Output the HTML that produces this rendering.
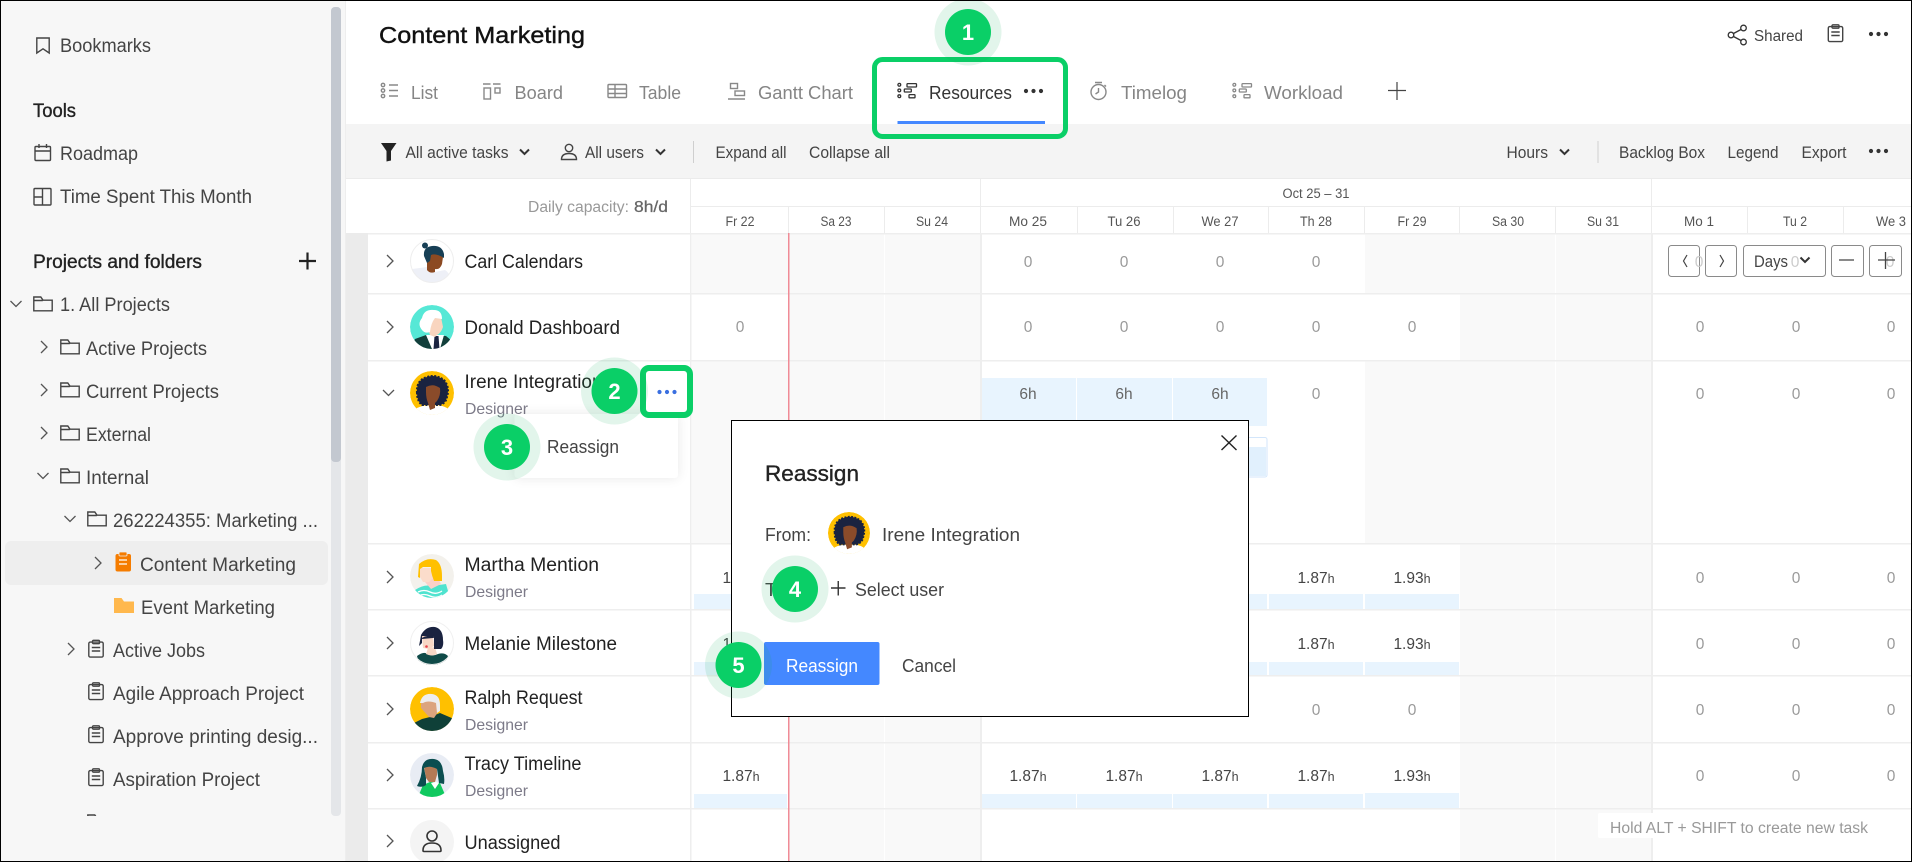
<!DOCTYPE html>
<html lang="en"><head><meta charset="utf-8"><title>Content Marketing</title>
<style>
html,body{margin:0;padding:0;background:#fff;width:1912px;height:862px;overflow:hidden}
svg{display:block}
text{font-family:"Liberation Sans",Arial,sans-serif;white-space:pre}
.s{font-size:19px;fill:#444}
.b{font-size:19px;fill:#222;stroke:#222;stroke-width:.35}
.n{font-size:19px;fill:#222}
.d{font-size:16px;fill:#7c7a88}
.t{font-size:18.5px;fill:#858585}
.k{font-size:16.5px;fill:#444}
.h{font-size:13.5px;fill:#555;text-anchor:middle}
.z{font-size:15.5px;fill:#9a9a9a;text-anchor:middle}
.v{font-size:15.5px;fill:#444;text-anchor:middle}
.v tspan{font-size:12.5px}
.m{font-size:18.5px;fill:#444}
.c{font-size:22px;font-weight:bold;fill:#fff;text-anchor:middle}
.i{fill:none;stroke:#444;stroke-width:1.4}
.g{fill:none;stroke:#888;stroke-width:1.4}
</style></head><body>
<svg width="1912" height="862" viewBox="0 0 1912 862" xmlns="http://www.w3.org/2000/svg">
<defs>
<clipPath id="cc"><circle r="22"/></clipPath>
<clipPath id="sl"><rect x="0" y="0" width="330" height="816"/></clipPath>
<g id="folder" fill="none" stroke="#444" stroke-width="1.4"><path d="M.8 4.5V1h7l2.2 3.2h9.2v10.6H.8zM.8 4.5h9"/></g>
<g id="clip" fill="none" stroke="#444" stroke-width="1.4"><rect x=".8" y="2.6" width="14.4" height="15" rx="1.5"/><rect x="4.5" y=".8" width="7" height="3.4" rx="1"/><path d="M3.8 8h8.4M3.8 11.5h8.4"/></g>
<g id="res"><g fill="none" stroke-width="1.3"><circle cx="1.8" cy="1.8" r="1.4"/><circle cx="1.8" cy="7.4" r="1.4"/><circle cx="1.8" cy="13.2" r="1.4"/><rect x="9.5" y=".6" width="9.5" height="3.4" rx=".6"/><rect x="6.8" y="6" width="7" height="3" rx=".6"/><rect x="11.5" y="11.6" width="6" height="3.2" rx=".6"/></g></g>
<g id="cr"><path d="M-3-6 3 0-3 6" fill="none" stroke="#555" stroke-width="1.3"/></g>
<g id="cd"><path d="M-5.5-3 0 2.5 5.5-3" fill="none" stroke="#555" stroke-width="1.3"/></g>
<g id="ck"><path d="M-4.500-2.500 0 2 4.500-2.500" fill="none" stroke="#333" stroke-width="2"/></g>
<g id="dots"><circle cx="-7.500" r="2.100"/><circle r="2.100"/><circle cx="7.500" r="2.100"/></g>
<g id="irene"><g clip-path="url(#cc)"><circle r="22" fill="#ffc000"/><path d="M-22 24-15 15Q-6 11 0 13 8 11 15 15L22 24z" fill="#fff"/><path d="M-15 0Q-16-13-5-16 4-19 12-13 18-6 15 4 14 10 8 12L-10 12Q-15 8-15 0z" fill="#1a2340" stroke="#1a2340" stroke-width="2" stroke-dasharray="2 1.500"/><path d="M-6-6Q1-10 8-5 9 2 5 8L3 10 3 15-2 17-4 10Q-6 5-6-1z" fill="#8a4b2a"/></g></g>
</defs>

<!-- sidebar -->
<rect width="1912" height="862" fill="#fff"/>
<rect x="0" y="0" width="345" height="862" fill="#f7f7f7"/>
<rect x="345" y="0" width="1" height="862" fill="#eeeeee"/>
<rect x="331" y="7" width="10" height="809" rx="4" fill="#e4e6e9"/>
<rect x="331" y="7" width="10" height="455" rx="4" fill="#c3c8d0"/>

<path class="i" d="M36.800 38h12.400v15l-6.200-4.200-6.200 4.200z"/>
<text class="s" x="60" y="52" textLength="91" lengthAdjust="spacingAndGlyphs">Bookmarks</text>
<text class="b" x="33" y="117" textLength="43" lengthAdjust="spacingAndGlyphs">Tools</text>
<g class="i"><rect x="35" y="146.500" width="15.500" height="14" rx="1"/><path d="M35 151h15.500M39 144v4M46.500 144v4"/></g>
<text class="s" x="60" y="160" textLength="78" lengthAdjust="spacingAndGlyphs">Roadmap</text>
<g class="i"><rect x="34" y="188.500" width="17" height="16.500" rx="1"/><path d="M42.500 188.500V205M34 197h8.500"/></g>
<text class="s" x="60" y="203" textLength="192" lengthAdjust="spacingAndGlyphs">Time Spent This Month</text>
<text class="b" x="33" y="268" textLength="169" lengthAdjust="spacingAndGlyphs">Projects and folders</text>
<path d="M299 261h17M307.500 252.500v17" stroke="#222" stroke-width="2.200" fill="none"/>

<use href="#cd" x="16" y="304"/><use href="#folder" x="33" y="296"/>
<text class="s" x="60" y="311" textLength="110" lengthAdjust="spacingAndGlyphs">1. All Projects</text>
<use href="#cr" x="44" y="347"/><use href="#folder" x="60" y="339"/>
<text class="s" x="86" y="355" textLength="121" lengthAdjust="spacingAndGlyphs">Active Projects</text>
<use href="#cr" x="44" y="390"/><use href="#folder" x="60" y="382"/>
<text class="s" x="86" y="398" textLength="133" lengthAdjust="spacingAndGlyphs">Current Projects</text>
<use href="#cr" x="44" y="433"/><use href="#folder" x="60" y="425"/>
<text class="s" x="86" y="441" textLength="65" lengthAdjust="spacingAndGlyphs">External</text>
<use href="#cd" x="43" y="476"/><use href="#folder" x="60" y="468"/>
<text class="s" x="86" y="484" textLength="63" lengthAdjust="spacingAndGlyphs">Internal</text>
<use href="#cd" x="70" y="519"/><use href="#folder" x="87" y="511"/>
<text class="s" x="113" y="527" textLength="205" lengthAdjust="spacingAndGlyphs">262224355: Marketing ...</text>
<rect x="5" y="541" width="323" height="44" rx="6" fill="#eeeeee"/>
<use href="#cr" x="98" y="563"/>
<g><rect x="115.500" y="554" width="15.500" height="17.500" rx="2" fill="#f57c00"/><rect x="119" y="552" width="8" height="4" rx="1" fill="#f57c00" stroke="#eee" stroke-width=".8"/><path d="M119 560h8M119 564h8" stroke="#fff" stroke-width="1.300"/></g>
<text class="s" x="140" y="571" textLength="156" lengthAdjust="spacingAndGlyphs">Content Marketing</text>
<path d="M114 613V598h7.500l2.500 3.500h10V613z" fill="#ffb84d"/>
<text class="s" x="141" y="614" textLength="134" lengthAdjust="spacingAndGlyphs">Event Marketing</text>
<use href="#cr" x="71" y="649"/><use href="#clip" x="88" y="639.500"/>
<text class="s" x="113" y="657" textLength="92" lengthAdjust="spacingAndGlyphs">Active Jobs</text>
<use href="#clip" x="88" y="682"/>
<text class="s" x="113" y="700" textLength="191" lengthAdjust="spacingAndGlyphs">Agile Approach Project</text>
<use href="#clip" x="88" y="725"/>
<text class="s" x="113" y="743" textLength="205" lengthAdjust="spacingAndGlyphs">Approve printing desig...</text>
<use href="#clip" x="88" y="768"/>
<text class="s" x="113" y="786" textLength="147" lengthAdjust="spacingAndGlyphs">Aspiration Project</text>
<g clip-path="url(#sl)"><use href="#folder" x="87" y="814"/><use href="#cr" x="71" y="824"/><text class="s" x="113" y="830" textLength="110" lengthAdjust="spacingAndGlyphs">Sales kickoff</text></g>

<!-- main chrome -->
<rect x="346" y="124" width="1566" height="54" fill="#f4f4f4"/>
<rect x="346" y="178" width="1566" height="1" fill="#ebebeb"/>
<rect x="346" y="233" width="22" height="629" fill="#ebebeb"/>

<text x="379" y="43" font-size="23.500" fill="#111" stroke="#111" stroke-width=".4" textLength="206" lengthAdjust="spacingAndGlyphs">Content Marketing</text>

<!-- tabs -->
<g class="g"><circle cx="383" cy="85" r="1.700"/><circle cx="383" cy="90.500" r="1.700"/><circle cx="383" cy="96" r="1.700"/><path d="M389 85h9M389 90.500h9M389 96h9"/></g>
<text class="t" x="411" y="99" textLength="27" lengthAdjust="spacingAndGlyphs">List</text>
<g class="g"><path d="M483 84h7.500M493 84h7.500"/><rect x="484" y="88" width="6.500" height="11"/><rect x="495" y="88" width="5" height="5"/></g>
<text class="t" x="514.500" y="99" textLength="48.500" lengthAdjust="spacingAndGlyphs">Board</text>
<g class="g"><rect x="608" y="84.500" width="18.500" height="13" rx="1"/><path d="M608 89h18.500M608 93.500h18.500M615 84.500v13"/></g>
<text class="t" x="639" y="99" textLength="42" lengthAdjust="spacingAndGlyphs">Table</text>
<g class="g"><rect x="730.500" y="83.500" width="7" height="5"/><rect x="735" y="91" width="9.500" height="4.500"/><path d="M728 99h17"/></g>
<text class="t" x="758" y="99" textLength="95" lengthAdjust="spacingAndGlyphs">Gantt Chart</text>
<use href="#res" x="897.500" y="83" stroke="#333"/>
<text x="929" y="99" font-size="18.500" fill="#333" textLength="83" lengthAdjust="spacingAndGlyphs">Resources</text>
<use href="#dots" x="1033.500" y="91" fill="#333"/>
<rect x="897.500" y="121" width="147.500" height="3" fill="#4488ff"/>
<g class="g"><circle cx="1098.500" cy="92" r="7.500"/><path d="M1098.500 88v4l-3 2M1095 82.500h7M1104.500 85l1.500 1.500"/></g>
<text class="t" x="1121" y="99" textLength="66" lengthAdjust="spacingAndGlyphs">Timelog</text>
<use href="#res" x="1232.500" y="83" stroke="#888"/>
<text class="t" x="1264" y="99" textLength="79" lengthAdjust="spacingAndGlyphs">Workload</text>
<path d="M1388 90.500h18M1397 82v18" stroke="#444" stroke-width="1.200" fill="none"/>

<!-- top right -->
<g fill="none" stroke="#333" stroke-width="1.300"><circle cx="1743.500" cy="28" r="2.800"/><circle cx="1731" cy="35" r="2.800"/><circle cx="1743.500" cy="42" r="2.800"/><path d="M1733.500 33.500 1741 29.500M1733.500 36.500 1741 40.500"/></g>
<text x="1754" y="41" font-size="15.500" fill="#444" textLength="49" lengthAdjust="spacingAndGlyphs">Shared</text>
<use href="#clip" x="1827.500" y="24"/>
<use href="#dots" x="1878.500" y="34" fill="#333"/>

<!-- toolbar -->
<path d="M381 143h15.500l-5.500 8v9.500l-4.500 1V151z" fill="#222"/>
<text class="k" x="405.500" y="158" textLength="103" lengthAdjust="spacingAndGlyphs">All active tasks</text>
<use href="#ck" x="524.500" y="152"/>
<g fill="none" stroke="#444" stroke-width="1.400"><circle cx="569" cy="148" r="3.700"/><path d="M561.500 159.500q0-6 7.500-6t7.500 6z"/></g>
<text class="k" x="585" y="158" textLength="59" lengthAdjust="spacingAndGlyphs">All users</text>
<use href="#ck" x="660.500" y="152"/>
<rect x="693" y="141" width="1" height="22" fill="#cfcfcf"/>
<text class="k" x="715.500" y="158" textLength="71" lengthAdjust="spacingAndGlyphs">Expand all</text>
<text class="k" x="809" y="158" textLength="81" lengthAdjust="spacingAndGlyphs">Collapse all</text>
<text class="k" x="1506.500" y="158" textLength="41.500" lengthAdjust="spacingAndGlyphs">Hours</text>
<use href="#ck" x="1564.500" y="152"/>
<rect x="1597.500" y="141" width="1" height="22" fill="#cfcfcf"/>
<text class="k" x="1619" y="158" textLength="86" lengthAdjust="spacingAndGlyphs">Backlog Box</text>
<text class="k" x="1727.500" y="158" textLength="51" lengthAdjust="spacingAndGlyphs">Legend</text>
<text class="k" x="1801.500" y="158" textLength="45" lengthAdjust="spacingAndGlyphs">Export</text>
<use href="#dots" x="1878.500" y="151" fill="#333"/>

<!-- grid header -->
<text x="528" y="212" font-size="15.500" fill="#999" textLength="101" lengthAdjust="spacingAndGlyphs">Daily capacity:</text>
<text x="634" y="212" font-size="15.500" fill="#666" stroke="#666" stroke-width=".25" textLength="34" lengthAdjust="spacingAndGlyphs">8h/d</text>
<text class="h" x="1316" y="198" textLength="67" lengthAdjust="spacingAndGlyphs">Oct 25 – 31</text>
<text class="h" x="740" y="226" textLength="29" lengthAdjust="spacingAndGlyphs">Fr 22</text><text class="h" x="836" y="226" textLength="31" lengthAdjust="spacingAndGlyphs">Sa 23</text><text class="h" x="932" y="226" textLength="32" lengthAdjust="spacingAndGlyphs">Su 24</text>
<text class="h" x="1028" y="226" textLength="38" lengthAdjust="spacingAndGlyphs">Mo 25</text><text class="h" x="1124" y="226" textLength="33" lengthAdjust="spacingAndGlyphs">Tu 26</text><text class="h" x="1220" y="226" textLength="37" lengthAdjust="spacingAndGlyphs">We 27</text>
<text class="h" x="1316" y="226" textLength="32" lengthAdjust="spacingAndGlyphs">Th 28</text><text class="h" x="1412" y="226" textLength="29" lengthAdjust="spacingAndGlyphs">Fr 29</text><text class="h" x="1508" y="226" textLength="32" lengthAdjust="spacingAndGlyphs">Sa 30</text>
<text class="h" x="1603" y="226" textLength="32" lengthAdjust="spacingAndGlyphs">Su 31</text><text class="h" x="1699" y="226" textLength="30" lengthAdjust="spacingAndGlyphs">Mo 1</text><text class="h" x="1795" y="226" textLength="24" lengthAdjust="spacingAndGlyphs">Tu 2</text><text class="h" x="1891" y="226" textLength="30" lengthAdjust="spacingAndGlyphs">We 3</text>
<rect x="691" y="206" width="1221" height="1" fill="#ececec"/>
<g fill="#ececec">
<rect x="788" y="206" width="1" height="27"/><rect x="884" y="206" width="1" height="27"/><rect x="1077" y="206" width="1" height="27"/><rect x="1173" y="206" width="1" height="27"/><rect x="1268" y="206" width="1" height="27"/><rect x="1364" y="206" width="1" height="27"/><rect x="1459" y="206" width="1" height="27"/><rect x="1555" y="206" width="1" height="27"/><rect x="1747" y="206" width="1" height="27"/><rect x="1843" y="206" width="1" height="27"/>
<rect x="980" y="179" width="1" height="54"/><rect x="1651" y="179" width="1" height="54"/><rect x="690" y="179" width="1" height="54"/>
</g>

<!-- shaded cells -->
<g fill="#f9f9f9">
<rect x="692" y="234" width="288" height="59"/><rect x="1365" y="234" width="286" height="59"/>
<rect x="789" y="294" width="191" height="66"/><rect x="1460" y="294" width="191" height="66"/>
<rect x="692" y="361" width="288" height="182"/><rect x="1365" y="361" width="286" height="182"/>
<rect x="789" y="544" width="191" height="318"/><rect x="1460" y="544" width="191" height="318"/>
</g>
<g fill="#fff"><rect x="884" y="234" width="1" height="628"/><rect x="1555" y="234" width="1" height="628"/></g>

<!-- bars -->
<g fill="#e8f4fe">
<rect x="982" y="378" width="94" height="48"/><rect x="1077" y="378" width="95" height="48"/><rect x="1173" y="378" width="94" height="48"/>
<rect x="694" y="594" width="93" height="15"/><rect x="982" y="594" width="94" height="15"/><rect x="1077" y="594" width="95" height="15"/><rect x="1173" y="594" width="94" height="15"/><rect x="1269" y="594" width="94" height="15"/><rect x="1365" y="594" width="94" height="15"/>
<rect x="694" y="662" width="93" height="13"/><rect x="982" y="662" width="94" height="13"/><rect x="1077" y="662" width="95" height="13"/><rect x="1173" y="662" width="94" height="13"/><rect x="1269" y="662" width="94" height="13"/><rect x="1365" y="662" width="94" height="13"/>
<rect x="694" y="794" width="93" height="14"/><rect x="982" y="794" width="94" height="14"/><rect x="1077" y="794" width="95" height="14"/><rect x="1173" y="794" width="94" height="14"/><rect x="1269" y="794" width="94" height="14"/><rect x="1365" y="793" width="94" height="15"/>
</g>
<rect x="1180" y="437.500" width="87" height="39.500" rx="2" fill="#fff" stroke="#d3e6fb"/>
<rect x="1180" y="447" width="86" height="29" fill="#e1f0fd"/>

<!-- grid lines -->
<g fill="#eeeeee">
<rect x="368" y="233" width="1544" height="1.500"/><rect x="368" y="293" width="1544" height="1.500"/><rect x="368" y="360" width="1544" height="1.500"/><rect x="368" y="543" width="1544" height="1.500"/><rect x="368" y="609" width="1544" height="1.500"/><rect x="368" y="675" width="1544" height="1.500"/><rect x="368" y="742" width="1544" height="1.500"/><rect x="368" y="808" width="1544" height="1.500"/>
<rect x="690" y="233" width="1.500" height="629"/><rect x="980" y="233" width="2" height="629"/><rect x="1651" y="233" width="2" height="629"/>
</g>
<rect x="788" y="233" width="1.500" height="629" fill="#f08b96"/>

<!-- values -->
<text class="z" x="1028" y="267">0</text><text class="z" x="1124" y="267">0</text><text class="z" x="1220" y="267">0</text><text class="z" x="1316" y="267">0</text>
<text class="z" x="740" y="332">0</text><text class="z" x="1028" y="332">0</text><text class="z" x="1124" y="332">0</text><text class="z" x="1220" y="332">0</text><text class="z" x="1316" y="332">0</text><text class="z" x="1412" y="332">0</text><text class="z" x="1700" y="332">0</text><text class="z" x="1796" y="332">0</text><text class="z" x="1891" y="332">0</text>
<text class="z" x="1028" y="399" style="fill:#666">6h</text><text class="z" x="1124" y="399" style="fill:#666">6h</text><text class="z" x="1220" y="399" style="fill:#666">6h</text><text class="z" x="1316" y="399">0</text><text class="z" x="1700" y="399">0</text><text class="z" x="1796" y="399">0</text><text class="z" x="1891" y="399">0</text>
<text class="v" x="741" y="583">1.87<tspan>h</tspan></text><text class="v" x="1316" y="583">1.87<tspan>h</tspan></text><text class="v" x="1412" y="583">1.93<tspan>h</tspan></text><text class="z" x="1700" y="583">0</text><text class="z" x="1796" y="583">0</text><text class="z" x="1891" y="583">0</text>
<text class="v" x="741" y="649">1.87<tspan>h</tspan></text><text class="v" x="1316" y="649">1.87<tspan>h</tspan></text><text class="v" x="1412" y="649">1.93<tspan>h</tspan></text><text class="z" x="1700" y="649">0</text><text class="z" x="1796" y="649">0</text><text class="z" x="1891" y="649">0</text>
<text class="z" x="1316" y="715">0</text><text class="z" x="1412" y="715">0</text><text class="z" x="1700" y="715">0</text><text class="z" x="1796" y="715">0</text><text class="z" x="1891" y="715">0</text>
<text class="v" x="741" y="781">1.87<tspan>h</tspan></text><text class="v" x="1028" y="781">1.87<tspan>h</tspan></text><text class="v" x="1124" y="781">1.87<tspan>h</tspan></text><text class="v" x="1220" y="781">1.87<tspan>h</tspan></text><text class="v" x="1316" y="781">1.87<tspan>h</tspan></text><text class="v" x="1412" y="781">1.93<tspan>h</tspan></text><text class="z" x="1700" y="781">0</text><text class="z" x="1796" y="781">0</text><text class="z" x="1891" y="781">0</text>

<!-- controls -->
<g fill="#fff" stroke="#8a8a8a" stroke-width="1">
<rect x="1668.500" y="245.500" width="31" height="31" rx="3"/><rect x="1705.500" y="245.500" width="31" height="31" rx="3"/><rect x="1743.500" y="245.500" width="82" height="31" rx="3"/><rect x="1831.500" y="245.500" width="32" height="31" rx="3"/><rect x="1869.500" y="245.500" width="32" height="31" rx="3"/>
</g>
<text class="z" x="1699" y="267" style="fill:#ccc">0</text><text class="z" x="1795" y="267" style="fill:#ccc">0</text><text class="z" x="1890" y="267" style="fill:#ccc">0</text>
<path d="M1687 255l-3.500 6 3.500 6M1720 255l3.500 6-3.500 6" fill="none" stroke="#444" stroke-width="1.200"/>
<text x="1754" y="267" font-size="16.500" fill="#444" textLength="34" lengthAdjust="spacingAndGlyphs">Days</text>
<use href="#ck" x="1805" y="260"/>
<path d="M1839 260h15M1878 260h17M1885.500 252v17" stroke="#444" stroke-width="1.300" fill="none"/>

<rect x="1598" y="813" width="313" height="25" rx="2" fill="#fff"/>
<text x="1610" y="833" font-size="15.500" fill="#999" textLength="258" lengthAdjust="spacingAndGlyphs">Hold ALT + SHIFT to create new task</text>

<!-- people -->
<use href="#cr" x="390" y="261"/><use href="#cr" x="390" y="327"/><use href="#cd" x="388.500" y="393"/><use href="#cr" x="390" y="577"/><use href="#cr" x="390" y="643"/><use href="#cr" x="390" y="709"/><use href="#cr" x="390" y="775"/><use href="#cr" x="390" y="841"/>

<g transform="translate(432,261)"><g clip-path="url(#cc)"><circle r="22" fill="#fff"/><path d="M-22 22-20 8Q-12 7-5 6L3 11 13 9Q18 12 20 22z" fill="#eef0f7"/><path d="M-2-7Q5-9 11-4L10 3Q8 9 3 8L3 11Q-2 13-5 9L-5 1z" fill="#8c4a22"/><path d="M-8-5Q-9-14 0-15 10-16 12-7L12-3Q4-8-1-6L-2 0-5 2z" fill="#173f55"/><circle cx="-7" cy="-15.500" r="3" fill="#173f55"/></g><circle r="21.500" fill="none" stroke="#eeeeee"/></g>
<text class="n" x="464.500" y="268" textLength="118.500" lengthAdjust="spacingAndGlyphs">Carl Calendars</text>

<g transform="translate(432,327)"><g clip-path="url(#cc)"><circle r="22" fill="#56e8d6"/><path d="M-22 22-17 12-6 8 14 9 20 14 22 22z" fill="#123f3b"/><path d="M-6 8 12 8 8 22 0 22z" fill="#fff"/><path d="M2.500 9h4l1 13h-6z" fill="#1a2340"/><path d="M-5-9 9-10 11 0Q9 6 5 8L3 10-2 8-4 2z" fill="#f9d5bf"/><path d="M-10 3Q-15-3-10-9-8-18 2-17 10-17 10-8L3-9Q-1-4-2 5-7 7-10 3z" fill="#fff"/></g></g>
<text class="n" x="464.500" y="334" textLength="155.500" lengthAdjust="spacingAndGlyphs">Donald Dashboard</text>

<g transform="translate(432,393)"><use href="#irene"/></g>
<text class="n" x="464.500" y="388" textLength="138" lengthAdjust="spacingAndGlyphs">Irene Integration</text>
<text class="d" x="465" y="414" textLength="63" lengthAdjust="spacingAndGlyphs">Designer</text>

<g transform="translate(432,576)"><g clip-path="url(#cc)"><circle r="22" fill="#f3f1ec"/><path d="M-17 14Q-8 8 0 10L14 8 18 22H-14z" fill="#4fe3cf"/><path d="M-7 6 5 0 9 8-1 13z" fill="#fbd0c8"/><path d="M-12-8-1-8 1 2-3 6-9 6-12 1z" fill="#fbdccb"/><path d="M-14 1-13-12Q-5-19 4-16 10-12 10 0L10 5 2 5Q0 0-1-5L-1-9-9-9-12-7-12 2z" fill="#ffc000"/><path d="M-14 16q6-3 12 0t12-1M-14 20q6-3 12 0t12-1" stroke="#fff" stroke-width="1.300" fill="none"/></g></g>
<text class="n" x="464.500" y="571" textLength="134.500" lengthAdjust="spacingAndGlyphs">Martha Mention</text>
<text class="d" x="465" y="597" textLength="63" lengthAdjust="spacingAndGlyphs">Designer</text>

<g transform="translate(432,643)"><g clip-path="url(#cc)"><circle r="22" fill="#fff"/><path d="M-15 13Q-8 8-5 11-0 14 6 11 12 9 16 13L12 24H-12z" fill="#0f4a48"/><path d="M-4 5 3 4 5 11Q0 14-6 11z" fill="#f7d7c6"/><path d="M-13 3Q-12-2-11-8-6-17 3-16 11-14 11-3 12 3 9 6L2 6 2-5-10-5-10 0z" fill="#1a2340"/><path d="M-10-7 1-7 2 3-3 6-9 5z" fill="#f7d7c6"/><path d="M-11-4Q-7-8 1-7L1-5-10-4z" fill="#1a2340"/><circle cx="-5.500" cy="3.500" r="1.300" fill="#e8404a"/></g><circle r="21.500" fill="none" stroke="#f0f0f0"/></g>
<text class="n" x="464.500" y="650" textLength="152.500" lengthAdjust="spacingAndGlyphs">Melanie Milestone</text>

<g transform="translate(432,709)"><g clip-path="url(#cc)"><circle r="22" fill="#ffc000"/><path d="M-22 16-10 10-2 8 8 4 22 10 22 24H-22z" fill="#0f4038"/><path d="M-11-8 6-8 6 3 2 9-3 8-11-1z" fill="#dca47e"/><path d="M-12-6Q-10-16 0-15 8-14 8-4L8 2 5 4 4-6Q-4-9-9-6z" fill="#eeeeee"/></g></g>
<text class="n" x="464.500" y="704" textLength="118" lengthAdjust="spacingAndGlyphs">Ralph Request</text>
<text class="d" x="465" y="730" textLength="63" lengthAdjust="spacingAndGlyphs">Designer</text>

<g transform="translate(432,775)"><g clip-path="url(#cc)"><circle r="22" fill="#e8ecf4"/><path d="M-14 22-9 10-2 7 8 8 14 22z" fill="#10c95f"/><path d="M-1 8 3 14 7 8 4 7z" fill="#fff"/><path d="M-8-8 5-9 5 0 3 7-3 7-6 3z" fill="#b57a55"/><path d="M-15 11Q-10 2-10-8-8-17 2-16 10-15 11-4 13 3 12 9L7 8 5-6Q-2-10-8-7L-6 3-6 10Q-10 13-15 11z" fill="#0b4e50"/></g></g>
<text class="n" x="464.500" y="770" textLength="117" lengthAdjust="spacingAndGlyphs">Tracy Timeline</text>
<text class="d" x="465" y="796" textLength="63" lengthAdjust="spacingAndGlyphs">Designer</text>

<g transform="translate(432,842)"><circle r="22" fill="#f4f4f4"/><g fill="none" stroke="#333" stroke-width="1.600"><circle cy="-6" r="5"/><path d="M-9 8.500Q-9 1 0 1T9 8.500Q9 9.500 8 9.500H-8Q-9 9.500-9 8.500z"/></g></g>
<text class="n" x="464.500" y="849" textLength="96" lengthAdjust="spacingAndGlyphs">Unassigned</text>

<!-- context menu -->
<rect x="514.500" y="414" width="163.500" height="64" rx="3" fill="#000" opacity=".09" style="filter:blur(6px)"/>
<rect x="514.500" y="414" width="163.500" height="64" rx="3" fill="#fff"/>
<text class="m" x="547" y="453" textLength="72" lengthAdjust="spacingAndGlyphs">Reassign</text>

<!-- green box 2 -->
<rect x="643" y="368" width="47" height="47" rx="6" fill="#fff" stroke="#0acf67" stroke-width="6"/>
<g fill="#3a6fe0"><circle cx="659.500" cy="392" r="2.100"/><circle cx="667" cy="392" r="2.100"/><circle cx="674.500" cy="392" r="2.100"/></g>

<!-- dialog -->
<rect x="731.500" y="420.500" width="517" height="296" fill="#fff" stroke="#000" stroke-width="1"/>
<path d="M1221.500 435.500 1236.500 450M1236.500 435.500 1221.500 450" stroke="#222" stroke-width="1.400" fill="none"/>
<text x="765" y="481" font-size="22" fill="#222" stroke="#222" stroke-width=".35" textLength="94" lengthAdjust="spacingAndGlyphs">Reassign</text>
<text class="m" x="765" y="541" textLength="46" lengthAdjust="spacingAndGlyphs">From:</text>
<g transform="translate(849,533) scale(.955)"><use href="#irene"/></g>
<text class="m" x="882" y="541" textLength="138" lengthAdjust="spacingAndGlyphs">Irene Integration</text>
<text class="m" x="765" y="596" textLength="26" lengthAdjust="spacingAndGlyphs">To:</text>
<path d="M831 588h14.500M838.250 581v14.500" stroke="#333" stroke-width="1.400" fill="none"/>
<text class="m" x="855" y="596" textLength="89" lengthAdjust="spacingAndGlyphs">Select user</text>
<rect x="764" y="642" width="115.500" height="43" rx="2" fill="#4488ff"/>
<text x="786" y="672" font-size="18.500" fill="#fff" textLength="72" lengthAdjust="spacingAndGlyphs">Reassign</text>
<text class="m" x="902" y="672" textLength="54" lengthAdjust="spacingAndGlyphs">Cancel</text>

<!-- green box 1 -->
<rect x="874.500" y="59.500" width="191" height="77" rx="8" fill="none" stroke="#0acf67" stroke-width="5"/>

<!-- callouts -->
<g fill="#14aa5a" fill-opacity=".12"><circle cx="968" cy="32" r="33.500"/><circle cx="614.500" cy="391" r="33.500"/><circle cx="507" cy="447" r="33.500"/><circle cx="795" cy="589" r="33.500"/><circle cx="738.500" cy="665" r="33.500"/></g>
<g fill="#0acf67"><circle cx="968" cy="32" r="23"/><circle cx="614.500" cy="391" r="23"/><circle cx="507" cy="447" r="23"/><circle cx="795" cy="589" r="23"/><circle cx="738.500" cy="665" r="23"/></g>
<text class="c" x="968" y="40">1</text><text class="c" x="614.500" y="399">2</text><text class="c" x="507" y="455">3</text><text class="c" x="795" y="597">4</text><text class="c" x="738.500" y="673">5</text>

<rect x=".5" y=".5" width="1911" height="861" fill="none" stroke="#000"/>
</svg>
</body></html>
